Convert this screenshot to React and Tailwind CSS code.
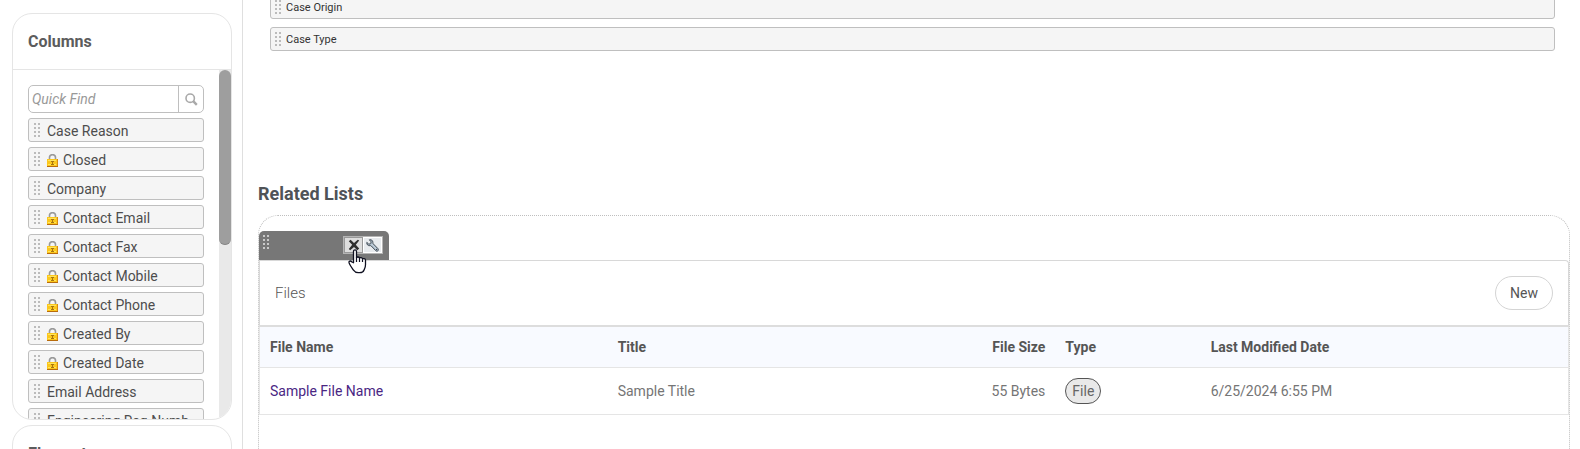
import React, { useState } from 'react';

const columns = [
  { label: 'Case Reason' },
  { label: 'Closed', locked: true },
  { label: 'Company' },
  { label: 'Contact Email', locked: true },
  { label: 'Contact Fax', locked: true },
  { label: 'Contact Mobile', locked: true },
  { label: 'Contact Phone', locked: true },
  { label: 'Created By', locked: true },
  { label: 'Created Date', locked: true },
  { label: 'Email Address' },
  { label: 'Engineering Req Numb' },
];

const Grip = ({ className = 'fill-[#bbbbbb]' }) => (
  <svg width="6" height="14" viewBox="0 0 6 14" shapeRendering="crispEdges" className={`shrink-0 ${className}`} aria-hidden="true">
    {[0, 4, 8, 12].map((y) => (
      <g key={y}>
        <rect x="0" y={y} width="2" height="2" />
        <rect x="4" y={y} width="2" height="2" />
      </g>
    ))}
  </svg>
);

const LockIcon = () => (
  <svg width="11" height="13" viewBox="0 0 11 13" className="shrink-0" aria-hidden="true">
    <path d="M2.5 6V3.5a3 2.8 0 0 1 6 0V6" fill="none" stroke="#9a9a9a" strokeWidth="1.6" />
    <rect x="0" y="5" width="11" height="8" fill="#d98a12" />
    <rect x="0" y="5" width="10" height="7" fill="#fbc71c" />
    <path d="M1 6.5h8M1 10.5h8" stroke="#ffe45c" />
    <rect x="0" y="12" width="11" height="1" fill="#b96c0c" />
    <path d="M4 7.5h3M5.5 7.5v3M4 10.5h3" stroke="#a8740c" />
  </svg>
);

const SearchIcon = () => (
  <svg width="13" height="13" viewBox="0 0 13 13" fill="none" stroke="#a9a9a9" aria-hidden="true">
    <circle cx="5.2" cy="5.2" r="4.2" strokeWidth="1.6" />
    <path d="M8.2 8.2l3.6 3.6" strokeWidth="2.4" />
  </svg>
);

const RemoveIcon = () => (
  <svg width="12" height="12" viewBox="0 0 12 12" aria-hidden="true">
    <path d="M.8 2.200L2.600.8 6 3.900 9.800.8l1.400.8-3.400 4.200 3.400 3.800L9.400 11.200 6 7.900 2.200 11.200.8 10l3.400-4.200z" fill="#2f2f2f" />
  </svg>
);

const WrenchIcon = () => (
  <svg width="13" height="13" viewBox="0 0 13 13" aria-hidden="true">
    <path
      d="M3.4.8C5 .2 7 1.4 6.9 3.6c0 .5 0 .9.4 1.3l4.6 4.7c.6.8.6 1.6 0 2.2-.6.6-1.5.5-2.1-.1L5.2 6.9c-.4-.4-.8-.3-1.3-.2C2 7 .5 5.4.8 3.4L2.6 5h1.7L5 4.200V2.700z"
      fill="#bccbd8"
      stroke="#3f4953"
    />
    <circle cx="10.6" cy="10.5" r="0.7" fill="#39424b" />
  </svg>
);

const HandCursor = () => (
  <svg width="19" height="25" viewBox="0 0 19 25" className="pointer-events-none absolute top-[18px] left-[89px]" aria-hidden="true">
    <path
      d="M5.5 13.8V2.4C5.5.4 8.5.4 8.5 2.4v6.400c.3-1.200 3-1.100 3 .5.4-1.100 3-.8 3 .8.5-.9 3-.5 3 1.200v4.400c0 2.800-.9 4-1.500 5.300-.5 1.600-2.200 2.700-4.200 2.700h-1.600c-2.200 0-3.700-1-4.700-2.500-1.200-1.800-2.600-3.500-3.700-5.700-.7-1.300-1.300-2.500-.6-3.100.8-.7 2-.3 2.800.6z"
      fill="#fff"
      stroke="#0f1020"
      strokeWidth="1.3"
      strokeLinejoin="round"
    />
    <path d="M8.500 8.500v4.500M11.500 9.300v3.700M14.500 10.300v2.700" stroke="#0f1020" strokeWidth="1.2" />
  </svg>
);

const ColumnItem = ({ label, locked }) => (
  <li className="flex h-6 cursor-move items-center rounded-[3px] border border-[#bfbfbf] bg-[#f5f5f5] pl-[5px] whitespace-nowrap">
    <Grip />
    <span className="ml-[7px] flex items-center gap-[5px] pt-[2px] text-sm text-[#4d4d4d]">
      {locked && <LockIcon />}
      {label}
    </span>
  </li>
);

const FieldRow = ({ label }) => (
  <li className="flex h-6 cursor-move items-center gap-[5px] rounded-[3px] border border-[#bfbfbf] bg-[#f5f5f5] pl-1 text-[11px] text-[#333333]">
    <Grip />
    <span className="pt-[2px]">{label}</span>
  </li>
);

const Sidebar = () => {
  const [query, setQuery] = useState('');
  const visible = columns.filter((c) => c.label.toLowerCase().includes(query.toLowerCase()));

  return (
    <aside className="w-[243px] shrink-0 border-r border-[#dfdfdf] pt-[13px] pr-[10px] pl-3">
      {/* Columns */}
      <section className="overflow-hidden rounded-[20px] border border-[#e5e5e5]">
        <h2 className="flex h-14 items-center border-b border-[#e5e5e5] pl-[15px] text-base font-bold text-[#5c5c5c]">
          Columns
        </h2>
        <div className="flex h-[349px]">
          <div className="min-w-0 flex-1 overflow-hidden pt-[15px] pr-[15px] pl-[15px]">
            <div className="flex h-7 rounded-[5px] border border-[#bfbfbf]">
              <input
                type="text"
                aria-label="Quick Find"
                placeholder="Quick Find"
                value={query}
                onChange={(e) => setQuery(e.target.value)}
                className="min-w-0 flex-1 pl-[3px] text-sm text-[#4d4d4d] italic outline-none placeholder:text-[#999999]"
              />
              <button type="button" aria-label="Search" className="flex w-[25px] items-center justify-center border-l border-[#bfbfbf]">
                <SearchIcon />
              </button>
            </div>
            <ul className="mt-[5px] flex flex-col gap-[5px]">
              {visible.map((c) => (
                <ColumnItem key={c.label} label={c.label} locked={c.locked} />
              ))}
            </ul>
          </div>
          <div className="w-3 bg-[#e9e9e9]">
            <div className="h-[175px] rounded-full border-b border-[#858585] bg-[#9e9e9e]" />
          </div>
        </div>
      </section>

      {/* Elements */}
      <section className="mt-[5px] rounded-[20px] border border-[#e5e5e5]">
        <h2 className="flex h-14 items-center border-b border-[#e5e5e5] pl-[15px] text-base font-bold text-[#5c5c5c]">
          Elements
        </h2>
        <div className="h-20" />
      </section>
    </aside>
  );
};

const FilesTable = () => (
  <table className="w-full table-fixed border border-t-2 border-[#e5e5e5] border-t-[#dddddd] text-left text-sm">
    <colgroup>
      <col className="w-[26.6%]" />
      <col className="w-[26.6%]" />
      <col className="w-[7.6%]" />
      <col className="w-[11.1%]" />
      <col />
    </colgroup>
    <thead>
      <tr className="h-[41px] border-b border-[#e5e5e5] bg-[#f8faff] text-[#555555]">
        <th className="px-[10px] font-bold">File Name</th>
        <th className="px-[10px] font-bold">Title</th>
        <th className="px-[10px] text-right font-bold">File Size</th>
        <th className="px-[10px] font-bold">Type</th>
        <th className="px-[10px] font-bold">Last Modified Date</th>
      </tr>
    </thead>
    <tbody>
      <tr className="h-[47px] text-[#757575]">
        <td className="px-[10px]">
          <a href="#file" className="text-[#4a2683]">Sample File Name</a>
        </td>
        <td className="px-[10px]">Sample Title</td>
        <td className="px-[10px] text-right">55 Bytes</td>
        <td className="px-[10px]">
          <span className="inline-flex h-[26px] items-center rounded-full border border-[#555555] bg-[#e9e9e9] px-[6px] text-[#666666]">
            File
          </span>
        </td>
        <td className="px-[10px]">6/25/2024 6:55 PM</td>
      </tr>
    </tbody>
  </table>
);

const RelatedList = () => (
  <div className="mt-[9px] h-[300px] rounded-[20px] border border-dotted border-[#bfbfbf] pt-[15px]">
    {/* Hover toolbar */}
    <div className="relative flex h-[29px] w-[130px] items-start rounded-t-[5px] bg-[#777777] pt-1 pl-1">
      <Grip className="fill-[#c9c9c9]" />
      <div className="mt-[1px] ml-auto mr-[6px] flex h-[18px] w-10 border border-[#b5b5b5]">
        <button type="button" aria-label="Remove" className="flex flex-1 items-center justify-center border border-[#999999] bg-[#dedede]">
          <RemoveIcon />
        </button>
        <button type="button" aria-label="Edit" className="flex flex-1 items-center justify-center border border-white bg-[#e8ebee]">
          <WrenchIcon />
        </button>
      </div>
      <HandCursor />
    </div>

    <div className="flex h-[65px] items-center justify-between rounded-tr-[4px] border border-b-0 border-[#d8d8d8] pr-[15px] pl-[15px]">
      <h3 className="text-[15px] font-light text-[#555555]">Files</h3>
      <button type="button" className="h-[34px] rounded-full border border-[#d4d4d4] px-[14px] text-sm text-[#555555]">
        New
      </button>
    </div>
    <FilesTable />
  </div>
);

const App = () => (
  <div className="flex h-screen overflow-hidden bg-white font-[Roboto,sans-serif]">
    <Sidebar />
    <main className="min-w-0 flex-1 pr-[10px] pl-[15px]">
      <ul className="-mt-[5px] flex flex-col gap-2 pr-[15px] pl-3">
        <FieldRow label="Case Origin" />
        <FieldRow label="Case Type" />
      </ul>
      <h2 className="mt-[131px] text-lg leading-6 font-bold text-[#4f5357]">Related Lists</h2>
      <RelatedList />
    </main>
  </div>
);

export default App;
